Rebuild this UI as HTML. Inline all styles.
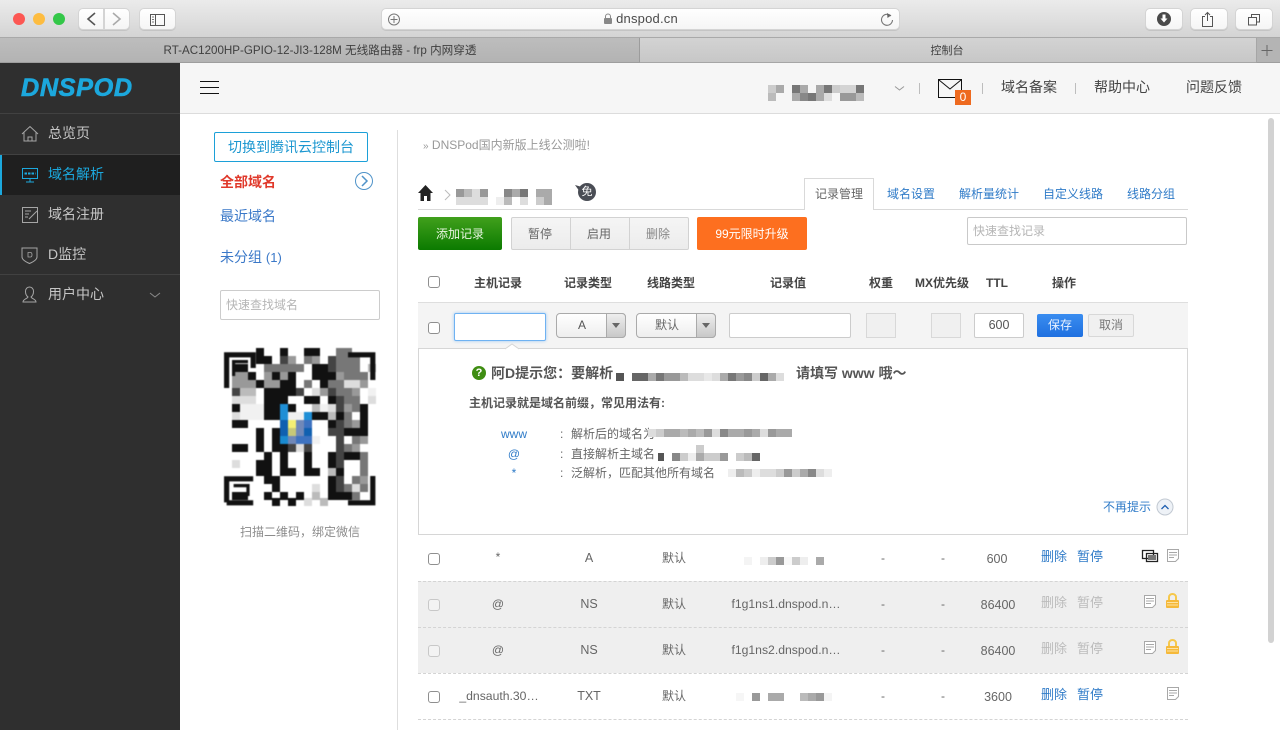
<!DOCTYPE html>
<html lang="zh"><head><meta charset="utf-8"><title>DNSPod</title>
<style>
html,body{margin:0;padding:0;width:1280px;height:730px;overflow:hidden;background:#fff}
body{position:relative;font:12px/20px "Liberation Sans","Noto Sans CJK SC",sans-serif;color:#666}
.a{position:absolute;box-sizing:border-box}
.t{position:absolute;white-space:nowrap;line-height:20px}
.c{transform:translateX(-50%)}
.b{font-weight:700}
.blue{color:#2f7bc8}
.v{font-size:12.500px}
.n{font-size:12.200px}
.cb{position:absolute;width:12px;height:12px;border:1px solid #8f8f8f;border-radius:3px;background:#fff;box-sizing:border-box}
.btn{position:absolute;box-sizing:border-box;background:linear-gradient(#fff,#f5f5f5);border:1px solid #d4d4d4;border-radius:5px;box-shadow:0 1px 0 #c4c4c4}
.inp{position:absolute;box-sizing:border-box;background:#fff;border:1px solid #ccc;border-radius:2px}
.nav{position:absolute;left:48px;font-size:14px;line-height:20px;color:#c6c6c6;white-space:nowrap}
svg{position:absolute;left:0;top:0}
</style></head><body>

<!-- browser chrome -->
<div class="a" style="left:0;top:0;width:1280px;height:38px;background:linear-gradient(#ebebeb,#d4d4d4);border-bottom:1px solid #a9a9a9"></div>
<div class="a" style="left:0;top:38px;width:640px;height:25px;background:linear-gradient(#bdbdbd,#b3b3b3);border-bottom:1px solid #9e9e9e;border-right:1px solid #9c9c9c"></div>
<div class="a" style="left:640px;top:38px;width:616px;height:25px;background:linear-gradient(#d3d3d3,#c7c7c7);border-bottom:1px solid #a6a6a6"></div>
<div class="a" style="left:1256px;top:38px;width:24px;height:25px;background:#b4b4b4;border-bottom:1px solid #9e9e9e;border-left:1px solid #a6a6a6"></div>
<div class="btn" style="left:78px;top:8px;width:26px;height:22px;border-radius:5px 0 0 5px"></div>
<div class="btn" style="left:104px;top:8px;width:26px;height:22px;border-radius:0 5px 5px 0"></div>
<div class="btn" style="left:139px;top:8px;width:37px;height:22px"></div>
<div class="btn" style="left:381px;top:8px;width:519px;height:22px"></div>
<div class="btn" style="left:1145px;top:8px;width:38px;height:22px"></div>
<div class="btn" style="left:1190px;top:8px;width:38px;height:22px"></div>
<div class="btn" style="left:1235px;top:8px;width:38px;height:22px"></div>
<div class="t c" style="left:647px;top:9px;font-size:13px;letter-spacing:.2px;color:#4a4a4a">dnspod.cn</div>
<div class="t c" style="left:320px;top:41px;font-size:11.600px;color:#3f3f3f">RT-AC1200HP-GPIO-12-JI3-128M 无线路由器 - frp 内网穿透</div>
<div class="t c" style="left:947px;top:41px;font-size:11px;color:#3f3f3f">控制台</div>

<!-- sidebar -->
<div class="a" style="left:0;top:63px;width:180px;height:667px;background:#2f2f2f"></div>
<div class="a" style="left:0;top:113px;width:180px;height:1px;background:#414141"></div>
<div class="a" style="left:0;top:154px;width:180px;height:1px;background:#414141"></div>
<div class="a" style="left:0;top:155px;width:180px;height:40px;background:#1f1f1f;border-left:2px solid #1ca8dd"></div>
<div class="a" style="left:0;top:274px;width:180px;height:1px;background:#414141"></div>
<div class="t" style="left:21px;top:78px;font:italic 700 25px/20px 'Liberation Sans',sans-serif;line-height:20px;color:#1ca8dd;letter-spacing:.6px;-webkit-text-stroke:.6px #1ca8dd;transform:scaleX(1.010);transform-origin:0 50%">DNSPOD</div>
<div class="nav" style="top:123px">总览页</div>
<div class="nav" style="top:164px;color:#1ca8dd">域名解析</div>
<div class="nav" style="top:204px">域名注册</div>
<div class="nav" style="top:244px">D监控</div>
<div class="nav" style="top:284px">用户中心</div>

<!-- top header -->
<div class="a" style="left:180px;top:63px;width:1100px;height:51px;background:#f6f6f6;border-bottom:1px solid #dcdcdc"></div>
<div class="t" style="left:1001px;top:77px;font-size:14px;color:#444">域名备案</div>
<div class="t" style="left:1094px;top:77px;font-size:14px;color:#444">帮助中心</div>
<div class="t" style="left:1186px;top:77px;font-size:14px;color:#444">问题反馈</div>

<!-- left column -->
<div class="a" style="left:214px;top:132px;width:154px;height:30px;border:1px solid #1ca0d8;border-radius:2px;color:#1c97d0;font-size:14px;line-height:28px;text-align:center">切换到腾讯云控制台</div>
<div class="t b" style="left:220px;top:172px;font-size:14px;color:#e0392b">全部域名</div>
<div class="t" style="left:220px;top:206px;font-size:14px;color:#3a78c8">最近域名</div>
<div class="t" style="left:220px;top:247px;font-size:14px;color:#3a78c8">未分组 <span style="font-size:13px">(1)</span></div>
<div class="inp" style="left:220px;top:290px;width:160px;height:30px;border-color:#ccc"></div>
<div class="t" style="left:226px;top:295px;color:#b5b5b5">快速查找域名</div>
<div class="t c" style="left:300px;top:522px;color:#8c8c8c">扫描二维码&#xFF0C;绑定微信</div>
<div class="a" style="left:397px;top:130px;width:1px;height:600px;background:#dedede"></div>

<!-- content top -->
<div class="t" style="left:423px;top:135px;color:#999"><span style="font-size:10px">»</span> DNSPod国内新版上线公测啦!</div>
<div class="a" style="left:418px;top:209px;width:770px;height:1px;background:#d9d9d9"></div>
<div class="a" style="left:804px;top:178px;width:70px;height:32px;background:#fff;border:1px solid #d9d9d9;border-bottom:0"></div>
<div class="t c" style="left:839px;top:184px;color:#666">记录管理</div>
<div class="t c blue" style="left:911px;top:184px">域名设置</div>
<div class="t c blue" style="left:989px;top:184px">解析量统计</div>
<div class="t c blue" style="left:1073px;top:184px">自定义线路</div>
<div class="t c blue" style="left:1151px;top:184px">线路分组</div>

<div class="a" style="left:418px;top:217px;width:84px;height:33px;background:linear-gradient(#41a01c,#0b7a00);border-radius:2px;color:#e8f5e0;line-height:34px;text-align:center">添加记录</div>
<div class="a" style="left:511px;top:217px;width:178px;height:33px;background:linear-gradient(#f5f5f5,#ececec);border:1px solid #d2d2d2;border-radius:2px"></div>
<div class="a" style="left:570px;top:218px;width:1px;height:31px;background:#d2d2d2"></div>
<div class="a" style="left:629px;top:218px;width:1px;height:31px;background:#d2d2d2"></div>
<div class="t c" style="left:540px;top:224px">暂停</div>
<div class="t c" style="left:599px;top:224px">启用</div>
<div class="t c" style="left:658px;top:224px;color:#888">删除</div>
<div class="a" style="left:697px;top:217px;width:110px;height:33px;background:#fd6f1f;border-radius:2px;color:#fff;line-height:34px;text-align:center">99元限时升级</div>
<div class="inp" style="left:967px;top:217px;width:220px;height:28px;border-color:#c9c9c9"></div>
<div class="t" style="left:973px;top:221px;color:#b5b5b5">快速查找记录</div>

<!-- table header -->
<div class="t c b" style="left:498px;top:273px;color:#444">主机记录</div>
<div class="t c b" style="left:588px;top:273px;color:#444">记录类型</div>
<div class="t c b" style="left:671px;top:273px;color:#444">线路类型</div>
<div class="t c b" style="left:788px;top:273px;color:#444">记录值</div>
<div class="t c b" style="left:881px;top:273px;color:#444">权重</div>
<div class="t c b" style="left:942px;top:273px;color:#444">MX优先级</div>
<div class="t c b" style="left:997px;top:273px;color:#444">TTL</div>
<div class="t c b" style="left:1064px;top:273px;color:#444">操作</div>
<div class="cb" style="left:428px;top:276px"></div>

<!-- edit row -->
<div class="a" style="left:418px;top:302px;width:770px;height:47px;background:#f4f4f4;border-top:1px solid #dedede"></div>
<div class="cb" style="left:428px;top:322px"></div>
<div class="inp" style="left:454px;top:313px;width:92px;height:28px;border-color:#6fb2f2;box-shadow:0 0 3px #9cc9f5"></div>
<div class="a" style="left:556px;top:313px;width:70px;height:25px;border:1px solid #aaa;border-radius:4px;background:linear-gradient(#fff,#eee)"></div>
<div class="a" style="left:606px;top:313px;width:20px;height:25px;border:1px solid #aaa;border-radius:0 4px 4px 0;background:linear-gradient(#eee,#c8c8c8)"></div>
<div class="t c" style="left:582px;top:315px;color:#555">A</div>
<div class="a" style="left:636px;top:313px;width:80px;height:25px;border:1px solid #aaa;border-radius:4px;background:linear-gradient(#fff,#eee)"></div>
<div class="a" style="left:696px;top:313px;width:20px;height:25px;border:1px solid #aaa;border-radius:0 4px 4px 0;background:linear-gradient(#eee,#c8c8c8)"></div>
<div class="t c" style="left:667px;top:315px;color:#666">默认</div>
<div class="inp" style="left:729px;top:313px;width:122px;height:25px"></div>
<div class="a" style="left:866px;top:313px;width:30px;height:25px;background:#f0f0f0;border:1px solid #d8d8d8"></div>
<div class="a" style="left:931px;top:313px;width:30px;height:25px;background:#f0f0f0;border:1px solid #d8d8d8"></div>
<div class="inp v" style="left:974px;top:313px;width:50px;height:25px;text-align:center;line-height:23px;color:#555">600</div>
<div class="a" style="left:1037px;top:314px;width:46px;height:23px;background:linear-gradient(#3a8df0,#1f70e0);border-radius:2px;color:#e8f2ff;line-height:23px;text-align:center">保存</div>
<div class="a" style="left:1088px;top:314px;width:46px;height:23px;background:#f0f0f0;border:1px solid #d8d8d8;border-radius:2px;color:#777;line-height:21px;text-align:center">取消</div>

<!-- tip -->
<div class="a" style="left:418px;top:348px;width:770px;height:187px;background:#fff;border:1px solid #d6d6d6"></div>
<div class="t b" style="left:491px;top:363px;font-size:14px;color:#555">阿D提示您&#xFF1A;要解析</div>
<div class="t b" style="left:796px;top:363px;font-size:14px;color:#555">请填写 www 哦〜</div>
<div class="t b" style="left:469px;top:393px;color:#555">主机记录就是域名前缀&#xFF0C;常见用法有:</div>
<div class="t c blue" style="left:514px;top:424px">www</div>
<div class="t c blue" style="left:514px;top:444px">@</div>
<div class="t c blue" style="left:514px;top:463px">*</div>
<div class="t" style="left:560px;top:424px">:</div>
<div class="t" style="left:560px;top:444px">:</div>
<div class="t" style="left:560px;top:463px">:</div>
<div class="t" style="left:571px;top:424px">解析后的域名为</div>
<div class="t" style="left:571px;top:444px">直接解析主域名</div>
<div class="t" style="left:571px;top:463px">泛解析&#xFF0C;匹配其他所有域名</div>
<div class="t blue" style="left:1103px;top:497px">不再提示</div>

<!-- rows -->
<div class="a" style="left:418px;top:581px;width:770px;height:92px;background:#efefef"></div>
<div class="a" style="left:418px;top:581px;width:770px;border-top:1px dashed #d4d4d4"></div>
<div class="a" style="left:418px;top:627px;width:770px;border-top:1px dashed #d4d4d4"></div>
<div class="a" style="left:418px;top:673px;width:770px;border-top:1px dashed #d4d4d4"></div>
<div class="a" style="left:418px;top:719px;width:770px;border-top:1px dashed #d4d4d4"></div>

<div class="cb" style="left:428px;top:553px"></div>
<div class="cb" style="left:428px;top:599px;border-color:#c8c8c8;background:#f3f3f3"></div>
<div class="cb" style="left:428px;top:645px;border-color:#c8c8c8;background:#f3f3f3"></div>
<div class="cb" style="left:428px;top:691px"></div>

<div class="t c" style="left:498px;top:547px">*</div>
<div class="t c v" style="left:589px;top:548px">A</div>
<div class="t c" style="left:674px;top:548px">默认</div>
<div class="t c" style="left:883px;top:548px">-</div>
<div class="t c" style="left:943px;top:548px">-</div>
<div class="t c v" style="left:997px;top:549px">600</div>
<div class="t blue" style="left:1041px;top:547px;font-size:13px">删除</div>
<div class="t blue" style="left:1077px;top:547px;font-size:13px">暂停</div>

<div class="t c" style="left:498px;top:594px">@</div>
<div class="t c v" style="left:589px;top:594px">NS</div>
<div class="t c" style="left:674px;top:594px">默认</div>
<div class="t c n" style="left:786px;top:594px">f1g1ns1.dnspod.n…</div>
<div class="t c" style="left:883px;top:594px">-</div>
<div class="t c" style="left:943px;top:594px">-</div>
<div class="t c v" style="left:998px;top:595px">86400</div>
<div class="t" style="left:1041px;top:593px;font-size:13px;color:#bbb">删除</div>
<div class="t" style="left:1077px;top:593px;font-size:13px;color:#bbb">暂停</div>

<div class="t c" style="left:498px;top:640px">@</div>
<div class="t c v" style="left:589px;top:640px">NS</div>
<div class="t c" style="left:674px;top:640px">默认</div>
<div class="t c n" style="left:786px;top:640px">f1g1ns2.dnspod.n…</div>
<div class="t c" style="left:883px;top:640px">-</div>
<div class="t c" style="left:943px;top:640px">-</div>
<div class="t c v" style="left:998px;top:641px">86400</div>
<div class="t" style="left:1041px;top:639px;font-size:13px;color:#bbb">删除</div>
<div class="t" style="left:1077px;top:639px;font-size:13px;color:#bbb">暂停</div>

<div class="t c n" style="left:499px;top:686px">_dnsauth.30…</div>
<div class="t c v" style="left:589px;top:686px">TXT</div>
<div class="t c" style="left:674px;top:686px">默认</div>
<div class="t c" style="left:883px;top:686px">-</div>
<div class="t c" style="left:943px;top:686px">-</div>
<div class="t c v" style="left:998px;top:687px">3600</div>
<div class="t blue" style="left:1041px;top:685px;font-size:13px">删除</div>
<div class="t blue" style="left:1077px;top:685px;font-size:13px">暂停</div>

<!-- scrollbar -->
<div class="a" style="left:1268px;top:118px;width:6px;height:525px;background:#d2d2d2;border-radius:3px"></div>

<!-- shapes and icons -->
<svg width="1280" height="730" viewBox="0 0 1280 730" fill="none">
<!-- traffic lights -->
<circle cx="19" cy="19" r="6" fill="#fc5753"/><circle cx="39" cy="19" r="6" fill="#fdbc40"/><circle cx="59" cy="19" r="6" fill="#33c748"/>
<path d="M95 13l-7 6 7 6" stroke="#555" stroke-width="1.600"/><path d="M113 13l7 6-7 6" stroke="#aaa" stroke-width="1.600"/>
<path d="M150.500 14.500h14v11h-14zM155.500 14.500v11" stroke="#555"/><path d="M152 17h2M152 19.500h2M152 22h2" stroke="#777"/>
<circle cx="394" cy="19.500" r="5.500" stroke="#777"/><path d="M394 16v7M390.500 19.500h7" stroke="#777"/>
<rect x="604" y="18" width="8" height="6" rx="1" fill="#888"/><path d="M605.500 18v-1.500a2.500 2.500 0 015 0V18" stroke="#888"/>
<path d="M891 16a5.500 5.500 0 101.500 4" stroke="#777" stroke-width="1.100"/><path d="M887 13l4 2.500-3.500 2.500z" fill="#666"/>
<circle cx="1164" cy="19" r="7" fill="#4a4a4a"/><path d="M1162.500 14.500h3v4h2l-3.500 4-3.500-4h2z" fill="#fff"/>
<path d="M1205 16.500h-2.500v10h10v-10H1210M1207.500 21V12.500M1205 15l2.500-2.500 2.500 2.500" stroke="#555"/>
<path d="M1248.500 17.500h8v7.500h-8zM1251.500 17.500v-3h8v7.500h-3" stroke="#555"/>
<path d="M1267 45v11M1261.500 50.500h11" stroke="#666"/>
<!-- nav icons -->
<path d="M22 134l8-7.500 8 7.500M24 132.500v8.500h12v-8.500M28 141v-4h4v4" stroke="#a6a6a6"/>
<path d="M22.500 168.500h15v10h-15zM30 178.500v3M26 182h8" stroke="#1ca8dd"/><path d="M24.500 173.500h11" stroke="#1ca8dd" stroke-width="2" stroke-dasharray="2.500 1"/>
<path d="M22.500 207.500h15v15h-15zM25 211h6M25 214h4M25 217h3M29 219l8-8" stroke="#a6a6a6"/>
<path d="M22 248h15v9c0 3-4 5-7.500 6.500-3.500-1.500-7.500-3.500-7.500-6.500z" stroke="#a6a6a6"/><path d="M28 252.500h2.500c2 0 2 4.500 0 4.500H28z" stroke="#a6a6a6" stroke-width=".8"/>
<path d="M23 302c0-3 4-3 5-5-2-1.500-2.500-3.500-2.500-5.500 0-3 2-4.500 4-4.500s4 1.500 4 4.500c0 2-.5 4-2.500 5.500 1 2 5 2 5 5z" stroke="#a6a6a6"/>
<path d="M150 293l5 4 5-4" stroke="#8a8a8a"/>
<!-- hamburger -->
<path d="M200 81.500h19M200 87.500h19M200 93.500h19" stroke="#111"/>
<!-- header right -->
<path d="M895 86.500l4.500 3.500 4.500-3.500" stroke="#999"/>
<path d="M919.500 83v11M982.500 83v11M1075.500 83v11" stroke="#bdbdbd"/>
<path d="M938.500 79.500h23v18h-23zM939 80l11 9 11-9" stroke="#111"/>
<!-- left col circle -->
<circle cx="364" cy="181" r="8.500" stroke="#4f93c9"/><path d="M362 176l5 5-5 5" stroke="#4f93c9" stroke-width="1.500"/>
<!-- breadcrumb -->
<path d="M425.500 185l-7.500 8h2.500v8h3.500v-5h3v5h3.500v-8h2.500z" fill="#222"/>
<path d="M445 190l5 5-5 5" stroke="#bbb"/>
<g>
<rect x="456" y="189" width="8" height="8" fill="#999"/><rect x="464" y="189" width="8" height="8" fill="#bbb"/><rect x="472" y="189" width="8" height="8" fill="#ddd"/><rect x="480" y="189" width="8" height="8" fill="#999"/>
<rect x="504" y="189" width="8" height="8" fill="#888"/><rect x="512" y="189" width="8" height="8" fill="#aaa"/><rect x="520" y="189" width="8" height="8" fill="#777"/><rect x="536" y="189" width="8" height="8" fill="#aaa"/><rect x="544" y="189" width="8" height="8" fill="#aaa"/>
<rect x="456" y="197" width="32" height="8" fill="#ddd"/><rect x="496" y="197" width="8" height="8" fill="#eee"/><rect x="504" y="197" width="8" height="8" fill="#bbb"/><rect x="520" y="197" width="8" height="8" fill="#ddd"/><rect x="536" y="197" width="8" height="8" fill="#ccc"/><rect x="544" y="197" width="8" height="8" fill="#aaa"/>
</g>
<path d="M575 185l7 2-2 5z" fill="#4a4d55"/><circle cx="587" cy="192" r="9" fill="#4a4d55"/>
<!-- select arrows -->
<path d="M612 323h8l-4 5zM702 323h8l-4 5z" fill="#666"/>
<!-- tip notch -->
<path d="M505 349l7-5 7 5" fill="#fff" stroke="#d6d6d6"/><path d="M506 349.500h12" stroke="#fff" stroke-width="1.500"/>
<circle cx="479" cy="373" r="7" fill="#3f8d12"/>
<circle cx="1165" cy="507" r="8" fill="#eef2f7" stroke="#c2c9d2"/><path d="M1161.500 509l3.500-3.500 3.500 3.500" stroke="#1f5fb0" stroke-width="1.300"/>
<!-- tip blur cells -->
<g>
<rect x="616" y="373" width="8" height="8" fill="#555"/><rect x="632" y="373" width="16" height="8" fill="#666"/><rect x="648" y="373" width="8" height="8" fill="#aaa"/><rect x="656" y="373" width="8" height="8" fill="#777"/><rect x="664" y="373" width="16" height="8" fill="#999"/><rect x="680" y="373" width="8" height="8" fill="#bbb"/><rect x="688" y="373" width="16" height="8" fill="#ddd"/><rect x="704" y="373" width="8" height="8" fill="#e8e8e8"/><rect x="712" y="373" width="8" height="8" fill="#ddd"/><rect x="720" y="373" width="8" height="8" fill="#aaa"/><rect x="728" y="373" width="8" height="8" fill="#777"/><rect x="736" y="373" width="8" height="8" fill="#999"/><rect x="744" y="373" width="8" height="8" fill="#888"/><rect x="752" y="373" width="8" height="8" fill="#ccc"/><rect x="760" y="373" width="8" height="8" fill="#666"/><rect x="768" y="373" width="8" height="8" fill="#aaa"/><rect x="776" y="373" width="8" height="8" fill="#ddd"/>
<rect x="648" y="429" width="8" height="8" fill="#ddd"/><rect x="656" y="429" width="8" height="8" fill="#ccc"/><rect x="664" y="429" width="16" height="8" fill="#aaa"/><rect x="680" y="429" width="8" height="8" fill="#bbb"/><rect x="688" y="429" width="8" height="8" fill="#aaa"/><rect x="696" y="429" width="8" height="8" fill="#bbb"/><rect x="704" y="429" width="8" height="8" fill="#999"/><rect x="712" y="429" width="8" height="8" fill="#ddd"/><rect x="720" y="429" width="8" height="8" fill="#888"/><rect x="728" y="429" width="16" height="8" fill="#aaa"/><rect x="744" y="429" width="8" height="8" fill="#999"/><rect x="752" y="429" width="8" height="8" fill="#aaa"/><rect x="760" y="429" width="8" height="8" fill="#ddd"/><rect x="768" y="429" width="8" height="8" fill="#999"/><rect x="776" y="429" width="16" height="8" fill="#aaa"/>
<rect x="696" y="445" width="8" height="8" fill="#ccc"/><rect x="658" y="453" width="6" height="8" fill="#555"/><rect x="672" y="453" width="8" height="8" fill="#888"/><rect x="680" y="453" width="8" height="8" fill="#ccc"/><rect x="688" y="453" width="8" height="8" fill="#eee"/><rect x="696" y="453" width="8" height="8" fill="#aaa"/><rect x="704" y="453" width="16" height="8" fill="#ccc"/><rect x="720" y="453" width="8" height="8" fill="#999"/><rect x="736" y="453" width="8" height="8" fill="#ccc"/><rect x="744" y="453" width="8" height="8" fill="#bbb"/><rect x="752" y="453" width="8" height="8" fill="#666"/>
<rect x="728" y="469" width="8" height="8" fill="#eee"/><rect x="736" y="469" width="8" height="8" fill="#bbb"/><rect x="744" y="469" width="8" height="8" fill="#ccc"/><rect x="752" y="469" width="8" height="8" fill="#eee"/><rect x="760" y="469" width="16" height="8" fill="#ddd"/><rect x="776" y="469" width="8" height="8" fill="#ccc"/><rect x="784" y="469" width="8" height="8" fill="#999"/><rect x="792" y="469" width="8" height="8" fill="#ccc"/><rect x="800" y="469" width="8" height="8" fill="#aaa"/><rect x="808" y="469" width="8" height="8" fill="#888"/><rect x="816" y="469" width="8" height="8" fill="#ddd"/><rect x="824" y="469" width="8" height="8" fill="#eee"/>
<!-- header account cells -->
<rect x="768" y="85" width="8" height="8" fill="#ccc"/><rect x="776" y="85" width="8" height="8" fill="#aaa"/><rect x="792" y="85" width="8" height="8" fill="#777"/><rect x="800" y="85" width="8" height="8" fill="#aaa"/><rect x="816" y="85" width="8" height="8" fill="#aaa"/><rect x="824" y="85" width="8" height="8" fill="#777"/><rect x="832" y="85" width="8" height="8" fill="#ccc"/><rect x="840" y="85" width="16" height="8" fill="#d4d4d4"/><rect x="856" y="85" width="8" height="8" fill="#777"/>
<rect x="768" y="93" width="8" height="8" fill="#bbb"/><rect x="792" y="93" width="8" height="8" fill="#aaa"/><rect x="800" y="93" width="8" height="8" fill="#888"/><rect x="808" y="93" width="8" height="8" fill="#777"/><rect x="816" y="93" width="8" height="8" fill="#aaa"/><rect x="824" y="93" width="8" height="8" fill="#ddd"/><rect x="840" y="93" width="16" height="8" fill="#999"/><rect x="856" y="93" width="8" height="8" fill="#bbb"/>
<!-- row value cells -->
<rect x="744" y="557" width="8" height="8" fill="#f4f4f4"/><rect x="760" y="557" width="8" height="8" fill="#eee"/><rect x="768" y="557" width="8" height="8" fill="#ccc"/><rect x="776" y="557" width="8" height="8" fill="#999"/><rect x="784" y="557" width="8" height="8" fill="#f8f8f8"/><rect x="792" y="557" width="8" height="8" fill="#ccc"/><rect x="800" y="557" width="8" height="8" fill="#eee"/><rect x="816" y="557" width="8" height="8" fill="#aaa"/>
<rect x="736" y="693" width="8" height="8" fill="#f6f6f6"/><rect x="752" y="693" width="8" height="8" fill="#999"/><rect x="768" y="693" width="16" height="8" fill="#aaa"/><rect x="800" y="693" width="8" height="8" fill="#bbb"/><rect x="808" y="693" width="8" height="8" fill="#aaa"/><rect x="816" y="693" width="8" height="8" fill="#999"/><rect x="824" y="693" width="8" height="8" fill="#f4f4f4"/>
</g>
<!-- row icons -->
<path d="M1142.500 550.500h11v8h-11zM1146.500 553.500h11v8h-11z" stroke="#222" stroke-width="1.300" fill="#fff"/><rect x="1148" y="555" width="8" height="5" fill="#777"/>
<g stroke="#a8a8a8" fill="#fff"><path d="M1167.500 549.500h11v9l-3 3h-8z"/><path d="M1144.500 595.500h11v9l-3 3h-8z"/><path d="M1144.500 641.500h11v9l-3 3h-8z"/><path d="M1167.500 687.500h11v9l-3 3h-8z"/></g>
<g stroke="#a8a8a8"><path d="M1169 552.500h8M1169 555h8M1169 557.500h5"/><path d="M1146 598.500h8M1146 601h8M1146 603.500h5"/><path d="M1146 644.500h8M1146 647h8M1146 649.500h5"/><path d="M1169 690.500h8M1169 693h8M1169 695.500h5"/></g>
<path d="M1169 600v-3a3.500 3 0 017 0v3" stroke="#f6c84c" stroke-width="2"/><rect x="1166" y="600" width="13" height="8" rx="1" fill="#f5b93a"/><path d="M1167 602.500h11M1167 605h11" stroke="#fde3a4"/>
<path d="M1169 646v-3a3.500 3 0 017 0v3" stroke="#f6c84c" stroke-width="2"/><rect x="1166" y="646" width="13" height="8" rx="1" fill="#f5b93a"/><path d="M1167 648.500h11M1167 651h11" stroke="#fde3a4"/>
</svg>

<div class="t c" style="left:587px;top:182px;font-size:11px;color:#fff">免</div>
<div class="t c b" style="left:479px;top:363px;font-size:11px;color:#fff">?</div>
<div class="a" style="left:955px;top:90px;width:16px;height:15px;background:#ee6a1f;color:#fff;font-size:12px;line-height:15px;text-align:center">0</div>

<!-- QR -->
<svg style="left:224px;top:348px;filter:blur(.4px)" width="152" height="158" viewBox="0 0 19 19.750" fill="none" stroke-width="1">
<path stroke="#111" d="M4 .5h1M7 .5h1M10 .5h2M4 1.500h2M1 2.500h2M11 2.500h2M3 3.500h1M6 3.500h1M8 3.500h1M11 3.500h3M4 4.500h1M7 4.500h2M12 4.500h1M5 5.500h4M5 6.500h3M10 6.500h2M13 6.500h1M1 7.500h1M5 7.500h2M8 7.500h1M17 7.500h1M5 8.500h2M11 8.500h2M14 8.500h1M17 8.500h1M1 9.500h2M13 9.500h1M17 9.500h1M4 10.500h1M6 10.500h1M15 10.500h3M4 11.500h1M6 11.500h1M1 12.500h2M4 12.500h1M6 12.500h2M5 13.500h1M7 13.500h1M10 13.500h1M13 13.500h1M15 13.500h2M4 14.500h2M7 14.500h1M10 14.500h1M13 14.500h1M4 15.500h2M7 15.500h2M10 15.500h2M14 15.500h1M5 16.500h2M13 16.500h1M6 17.500h1M13 17.500h1M1 18.500h2M5 18.500h1M7 18.500h1M9 18.500h1M13 18.500h3M6 19.250h1M8 19.250h1"/>
<path stroke="#444" d="M7 1.500h1M13 1.500h1M13 2.500h1M1 5.500h1M9 5.500h1M13 5.500h1M14 6.500h1M14 7.500h1M14 9.500h1M13 10.500h2M14 11.500h1M14 12.500h1M14 13.500h1M14 14.500h1M14 16.500h1M14 17.500h1M8 12.500h1M10 12.500h1"/>
<path stroke="#777" d="M14 .5h2M10 1.500h1M14 1.500h3M5 2.500h5M14 2.500h3M15 3.500h3M10 4.500h1M14 4.500h1M14 5.500h2M15 6.500h2M13 4.500h1M16 7.500h1M15 8.500h1M15 9.500h1M16 11.500h1M15 12.500h1M17 13.500h1M17 14.500h1M17 15.500h1M16 16.500h1M15 17.500h1M17 17.500h1M16 18.500h1"/>
<path stroke="#999" d="M8 1.500h1M11 1.500h1M1 3.500h2M5 3.500h1M7 3.500h1M14 3.500h1M1 4.500h3M5 4.500h2M17 4.500h1M12 5.500h1M16 5.500h1M7 7.500h1M15 7.500h1M16 9.500h1M16 12.500h1M17 11.500h1M17 16.500h1"/>
<path stroke="#bbb" d="M18 2.500h1M2 5.500h2M11 7.500h1M13 8.500h1M13 15.500h1M11 18.500h1M12 19.250h1"/>
<path stroke="#ddd" d="M15 4.500h2M1 6.500h3M13 7.500h1M1 8.500h1M1 14.500h1M11 17.500h1M16 17.500h1M9 12.500h1M10 19.250h1M11 5.500h1M18 6.500h1"/>
<path stroke="#f1f1f1" d="M18 5.500h1M2 7.500h3M12 7.500h1M2 8.500h3M8 8.500h2M11 11.500h1"/>
<path stroke="#1f8fd6" d="M7 7.500h1M7 8.500h1M10 8.500h1"/>
<path stroke="#1060b0" d="M7 9.500h1M7 10.500h1M10 10.500h1"/>
<path stroke="#f4ef74" d="M8 9.500h1"/><path stroke="#3d72c0" d="M10 9.500h1M9 11.500h2"/><path stroke="#c8c878" d="M8 10.500h1"/><path stroke="#7088b8" d="M9 10.500h1M9 9.500h1M8 11.500h1"/><path stroke="#1a8ad0" d="M7 11.500h1"/>
<!-- finder rings -->
<path stroke="#111" stroke-width=".65" d="M.33 5V.85H3.650V2.500M.33 19.300V16.350H3.650M.33 19.350H3.650M18.600 4V.85H15.500M18.600 16V19.350H15.500"/>
<path stroke="#111" stroke-width=".4" d="M1.200 3.500V1.700H3M1.200 17.200H3v1.300"/>
</svg>
</body></html>
